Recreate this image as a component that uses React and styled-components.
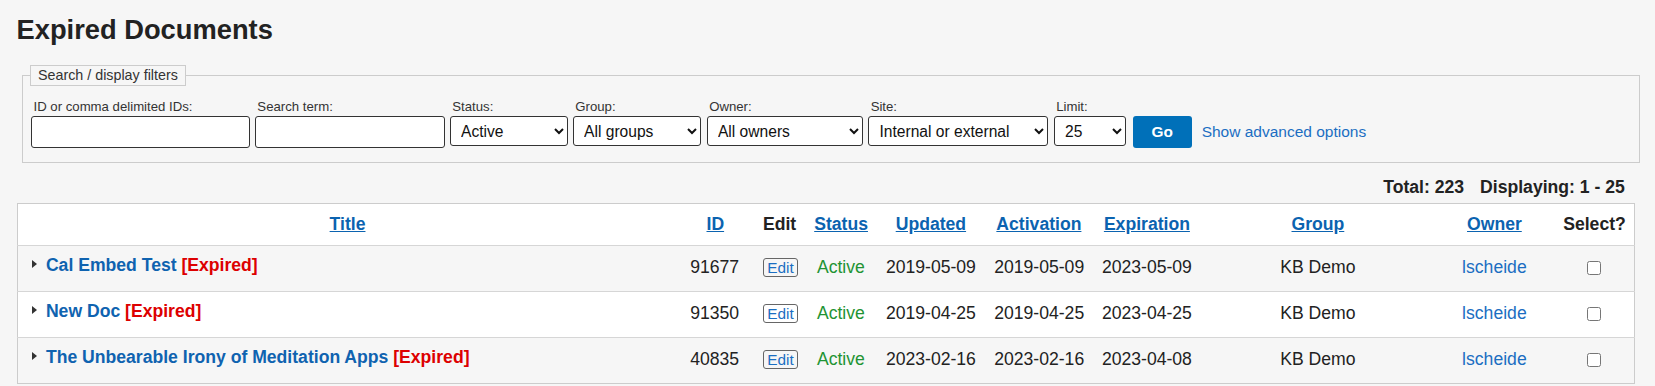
import React from 'react';
import styled, { createGlobalStyle } from 'styled-components';

const GlobalStyle = createGlobalStyle`
  body {
    margin: 0;
    background-color: #f6f6f6;
    font-family: "Liberation Sans", Arial, sans-serif;
    color: #222;
  }
`;

const Page = styled.div`
  width: 1617px;
  padding: 0 0 20px 17.3px;
`;

const Heading = styled.h1`
  margin: 14px 0 0 -0.8px;
  font-size: 27.3px;
  line-height: normal;
  font-weight: bold;
  color: #222;
`;

const Filters = styled.fieldset`
  margin: 18.5px -6px 0 4.7px;
  padding: 13.2px 8px 14.6px 7px;
  border: 1px solid #ccc;
  min-width: 0;
`;

const Legend = styled.legend`
  padding: 1.5px 7px;
  border: 1px solid #ccc;
  font-size: 14.3px;
  color: #333;
`;

const FilterRow = styled.div`
  display: flex;
  align-items: flex-end;
  gap: 5.5px;
  padding-left: 1.3px;
`;

const Field = styled.div`
  display: flex;
  flex-direction: column;
`;

const Label = styled.label`
  padding-left: 2.2px;
  margin-bottom: 2.6px;
  font-size: 13.2px;
  line-height: normal;
  color: #333;
`;

const TextInput = styled.input`
  box-sizing: border-box;
  width: ${(p) => p.$width}px;
  height: 31.4px;
  border: 1px solid #333;
  border-radius: 3px;
  background: #fff;
`;

const Select = styled.select`
  box-sizing: border-box;
  width: ${(p) => p.$width}px;
  height: 29.8px;
  margin-bottom: 1.6px;
  padding: 0 2px 0 6px;
  border: 1px solid #333;
  border-radius: 3px;
  background: #fff;
  color: #111;
  font-family: "Liberation Sans", Arial, sans-serif;
  font-size: 15.6px;
`;

const Actions = styled.div`
  display: flex;
  align-items: center;
  margin-left: 1px;
`;

const GoButton = styled.button`
  width: 58.7px;
  height: 31.7px;
  border: none;
  border-radius: 3px;
  background: #0070b9;
  color: #fff;
  font-family: "Liberation Sans", Arial, sans-serif;
  font-size: 15.4px;
  font-weight: bold;
`;

const AdvancedLink = styled.a`
  margin-left: 10px;
  color: #1b6ec2;
  font-size: 15.5px;
  text-decoration: none;
`;

const Totals = styled.div`
  margin-top: 13.3px;
  padding-right: 9.5px;
  text-align: right;
  font-size: 17.6px;
  font-weight: bold;
  line-height: normal;
  color: #222;

  span + span {
    margin-left: 16px;
  }
`;

const Table = styled.table`
  width: 1617px;
  margin-top: 5.5px;
  table-layout: fixed;
  border-collapse: collapse;
  background: #fff;
  border: 1px solid #ccc;
  font-size: 17.6px;
`;

const HeadCell = styled.th`
  padding: 10px 8.8px;
  text-align: center;
  font-weight: bold;
  line-height: normal;
  color: #222;
`;

const SortLink = styled.a`
  color: #0b63b0;
  text-decoration: underline;
`;

const Row = styled.tr`
  background: ${(p) => (p.$striped ? '#f6f6f6' : '#fff')};
  border-top: 1px solid #d6d6d6;
`;

const Cell = styled.td`
  padding: ${(p) => (p.$title ? '8.5px 8.8px 15.5px 13.6px' : '11px 8.8px 13px')};
  padding-right: ${(p) => (p.$align === 'right' ? '14.7px' : undefined)};
  text-align: ${(p) => p.$align || 'center'};
  vertical-align: ${(p) => (p.$middle ? 'middle' : 'top')};
  line-height: normal;
  color: #222;
  white-space: nowrap;
`;

const Caret = styled.span`
  display: inline-block;
  width: 0;
  height: 0;
  margin: 0 9px 3px 0;
  border-left: 5px solid #333;
  border-top: 4px solid transparent;
  border-bottom: 4px solid transparent;
  vertical-align: middle;
`;

const TitleLink = styled.a`
  color: #0f63b0;
  font-weight: bold;
  text-decoration: none;
`;

const ExpiredTag = styled.span`
  color: #dd0000;
  font-weight: bold;
`;

const EditButton = styled.a`
  display: inline-block;
  padding: 0 3.6px;
  border: 1px solid #666;
  border-radius: 3px;
  color: #1b6ec2;
  font-size: 15.4px;
  line-height: 17.3px;
  text-decoration: none;
  vertical-align: top;
  margin-top: 0.5px;
`;

const StatusText = styled.span`
  color: #1f9434;
`;

const OwnerLink = styled.a`
  color: #1b6ec2;
  text-decoration: none;
`;

const Checkbox = styled.input`
  width: 14px;
  height: 14px;
  margin: 0;
  vertical-align: middle;
`;

const columns = [
  { key: 'title', label: 'Title', width: 659, sortable: true },
  { key: 'id', label: 'ID', width: 77, sortable: true },
  { key: 'edit', label: 'Edit', width: 51.6 },
  { key: 'status', label: 'Status', width: 71, sortable: true },
  { key: 'updated', label: 'Updated', width: 109, sortable: true },
  { key: 'activation', label: 'Activation', width: 107, sortable: true },
  { key: 'expiration', label: 'Expiration', width: 109, sortable: true },
  { key: 'group', label: 'Group', width: 233, sortable: true },
  { key: 'owner', label: 'Owner', width: 120, sortable: true },
  { key: 'select', label: 'Select?', width: 80 },
];

const documents = [
  { id: 91677, title: 'Cal Embed Test', status: 'Active', updated: '2019-05-09', activation: '2019-05-09', expiration: '2023-05-09', group: 'KB Demo', owner: 'lscheide' },
  { id: 91350, title: 'New Doc', status: 'Active', updated: '2019-04-25', activation: '2019-04-25', expiration: '2023-04-25', group: 'KB Demo', owner: 'lscheide' },
  { id: 40835, title: 'The Unbearable Irony of Meditation Apps', status: 'Active', updated: '2023-02-16', activation: '2023-02-16', expiration: '2023-04-08', group: 'KB Demo', owner: 'lscheide' },
];

const App = () => {
  return (
    <Page>
      <GlobalStyle />
      <Heading>Expired Documents</Heading>

      <Filters>
        <Legend>Search / display filters</Legend>
        <FilterRow>
          <Field>
            <Label>ID or comma delimited IDs:</Label>
            <TextInput $width={218.4} />
          </Field>
          <Field>
            <Label>Search term:</Label>
            <TextInput $width={189.4} />
          </Field>
          <Field>
            <Label>Status:</Label>
            <Select $width={117.5} defaultValue="active">
              <option value="active">Active</option>
            </Select>
          </Field>
          <Field>
            <Label>Group:</Label>
            <Select $width={128.4}>
              <option>All groups</option>
            </Select>
          </Field>
          <Field>
            <Label>Owner:</Label>
            <Select $width={156}>
              <option>All owners</option>
            </Select>
          </Field>
          <Field>
            <Label>Site:</Label>
            <Select $width={180}>
              <option>Internal or external</option>
            </Select>
          </Field>
          <Field>
            <Label>Limit:</Label>
            <Select $width={72.5}>
              <option>25</option>
            </Select>
          </Field>
          <Actions>
            <GoButton>Go</GoButton>
            <AdvancedLink href="#">Show advanced options</AdvancedLink>
          </Actions>
        </FilterRow>
      </Filters>

      <Totals>
        <span>Total: 223</span>
        <span>Displaying: 1 - 25</span>
      </Totals>

      <Table>
        <colgroup>
          {columns.map((c) => (
            <col key={c.key} style={{ width: c.width }} />
          ))}
        </colgroup>
        <thead>
          <tr>
            {columns.map((c) => (
              <HeadCell key={c.key}>
                {c.sortable ? <SortLink href="#">{c.label}</SortLink> : c.label}
              </HeadCell>
            ))}
          </tr>
        </thead>
        <tbody>
          {documents.map((d, i) => (
            <Row key={d.id} $striped={i % 2 === 0}>
              <Cell $title $align="left">
                <Caret />
                <TitleLink href="#">{d.title}</TitleLink> <ExpiredTag>[Expired]</ExpiredTag>
              </Cell>
              <Cell $align="right">{d.id}</Cell>
              <Cell>
                <EditButton href="#">Edit</EditButton>
              </Cell>
              <Cell>
                <StatusText>{d.status}</StatusText>
              </Cell>
              <Cell>{d.updated}</Cell>
              <Cell>{d.activation}</Cell>
              <Cell>{d.expiration}</Cell>
              <Cell>{d.group}</Cell>
              <Cell>
                <OwnerLink href="#">{d.owner}</OwnerLink>
              </Cell>
              <Cell $middle>
                <Checkbox type="checkbox" />
              </Cell>
            </Row>
          ))}
        </tbody>
      </Table>
    </Page>
  );
};

export default App;
